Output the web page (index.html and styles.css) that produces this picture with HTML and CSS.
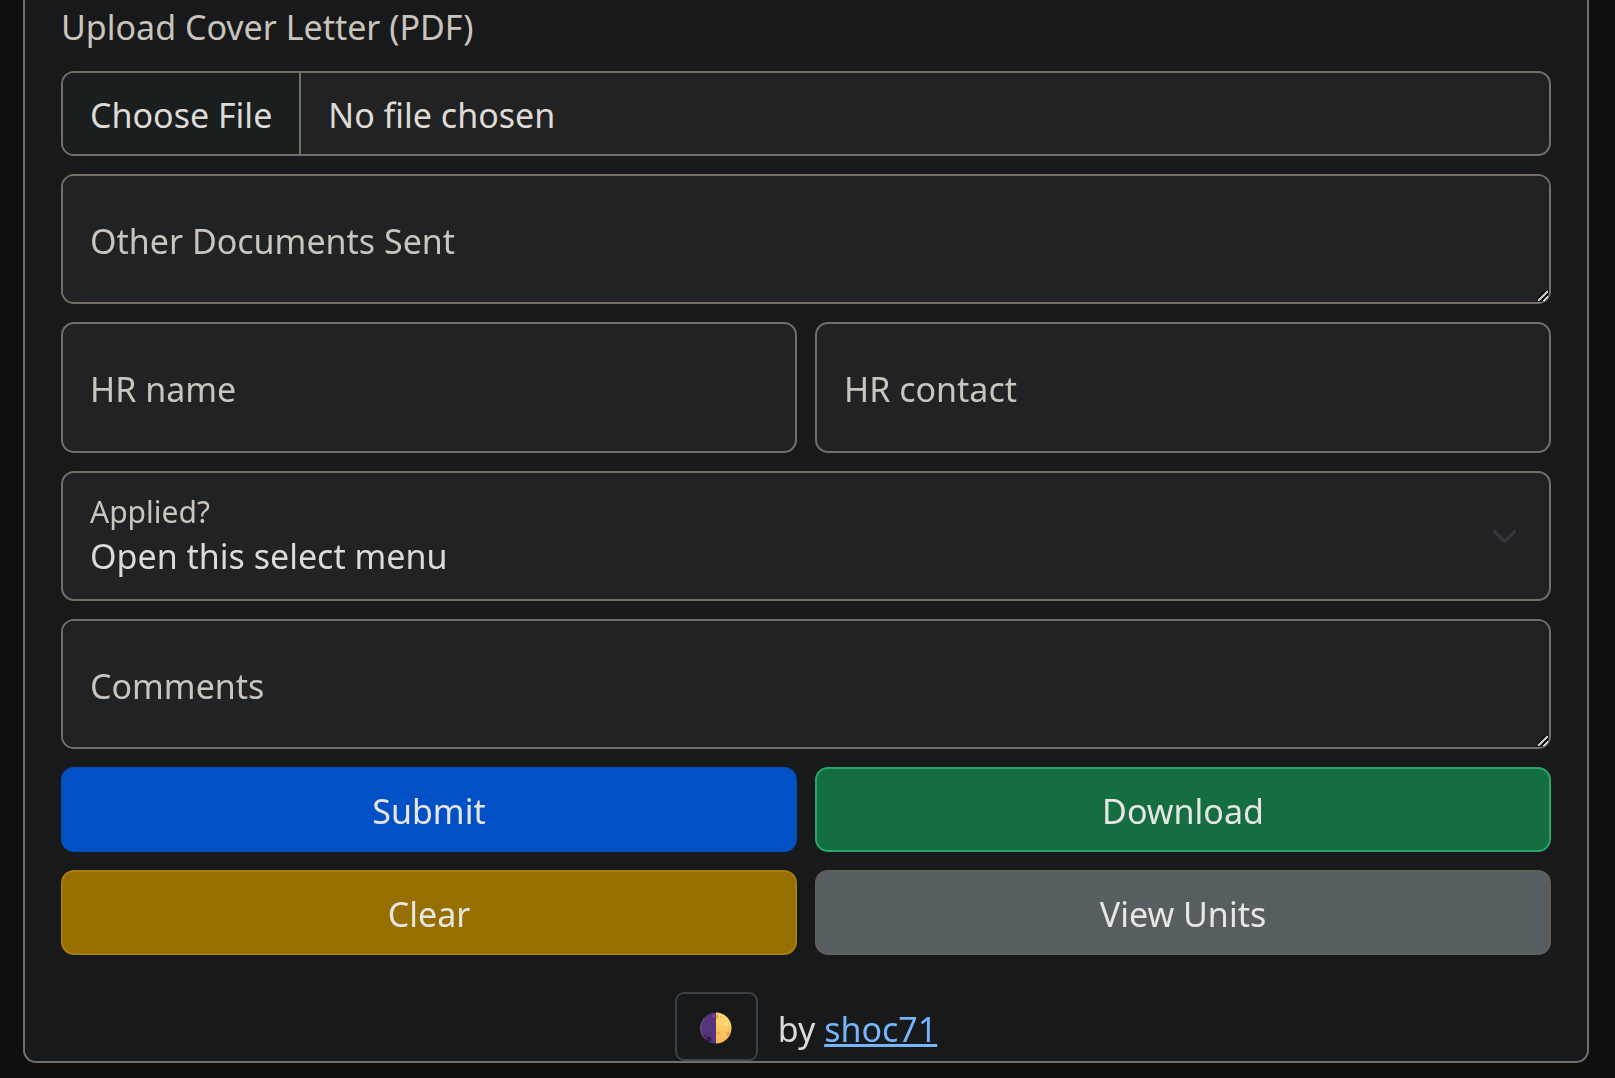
FILE: index.html
```html
<!DOCTYPE html>
<html lang="en">
<head>
<meta charset="utf-8">
<meta name="viewport" content="width=device-width, initial-scale=1">
<title>Job application</title>
<link rel="stylesheet" href="styles.css">
</head>
<body>
<main class="card">
  <form class="form">
    <div class="upload wide">
      <label class="upload-label" for="cover">Upload Cover Letter (PDF)</label>
      <input class="control file" type="file" id="cover" accept="application/pdf">
    </div>
    <div class="field wide">
      <textarea class="control" id="documents"></textarea>
      <label class="field-label" for="documents">Other Documents Sent</label>
    </div>
    <div class="field">
      <input class="control text" type="text" id="hr-name">
      <label class="field-label" for="hr-name">HR name</label>
    </div>
    <div class="field">
      <input class="control text" type="text" id="hr-contact">
      <label class="field-label" for="hr-contact">HR contact</label>
    </div>
    <div class="field wide">
      <select class="control select" id="applied">
        <option>Open this select menu</option>
        <option>Yes</option>
        <option>No</option>
      </select>
      <label class="field-label raised" for="applied">Applied?</label>
      <svg class="chevron" viewBox="0 0 16 16" aria-hidden="true"><path d="m2 5 6 6 6-6"/></svg>
    </div>
    <div class="field wide">
      <textarea class="control" id="comments"></textarea>
      <label class="field-label" for="comments">Comments</label>
    </div>
    <button class="btn submit" type="submit">Submit</button>
    <button class="btn download" type="button">Download</button>
    <button class="btn clear" type="reset">Clear</button>
    <button class="btn units" type="button">View Units</button>
  </form>
  <footer class="footer">
    <button class="theme" type="button" aria-label="Toggle theme">
      <svg class="moon" viewBox="0 0 32 32" aria-hidden="true">
        <defs>
          <linearGradient id="lit" x1="0" y1="0" x2="0" y2="1">
            <stop offset="0" stop-color="#ffdc74"/>
            <stop offset="1" stop-color="#f9b653"/>
          </linearGradient>
        </defs>
        <path d="M16 0.500a15.500 15.500 0 0 0 0 31z" fill="#56347c"/>
        <path d="M16 0.500a15.500 15.500 0 0 1 0 31z" fill="url(#lit)"/>
        <path d="M4 6.500A15.500 15.500 0 0 0 5 27" fill="none" stroke="#765a7d" stroke-width="1"/>
        <circle cx="9" cy="27" r="2.500" fill="#321c48"/>
        <circle cx="5" cy="24" r="1.500" fill="#422962"/>
        <circle cx="14" cy="4" r="2" fill="#6f4586"/>
        <path d="M16 2a2.500 2.500 0 0 1 0 5z" fill="#e9a54a"/>
        <circle cx="26" cy="12" r="2" fill="#ffe596"/>
        <circle cx="28" cy="22" r="2" fill="#e5a457"/>
        <circle cx="18" cy="21" r="2" fill="#f2b258"/>
        <circle cx="21" cy="5" r="1" fill="#ecaf54"/>
      </svg>
    </button>
    <p class="credit">by <a class="author" href="#">shoc71</a></p>
  </footer>
</main>
</body>
</html>
```
FILE: styles.css
```css
:root {
  color-scheme: dark;
  --line: #746e65;
  --field: #212223;
  --text: #dedbd6;
  --muted: #c9c4bc;
}

* {
  box-sizing: border-box;
}

body {
  margin: 0;
  padding: 0 26px 15px 23px;
  background: #0e100f;
  color: var(--text);
  font: 34px/55px "Noto Sans", "Open Sans", sans-serif;
}

.card {
  padding: 0 36px;
  border: 2px solid var(--line);
  border-top: 0;
  border-radius: 0 0 13px 13px;
  background: #18191a;
}

.form {
  display: grid;
  grid-template-columns: 1fr 1fr;
  gap: 18px;
}

.wide {
  grid-column: 1 / -1;
}

.upload {
  display: grid;
  gap: 16px;
}

.upload-label {
  color: var(--muted);
}

.control {
  display: block;
  width: 100%;
  height: 130px;
  margin: 0;
  padding: 52px 27px 20px;
  border: 2px solid var(--line);
  border-radius: 13px;
  background: var(--field);
  color: var(--text);
  font: inherit;
}

.control.text {
  height: 131px;
}

/* Two-stripe resize grip */
textarea::-webkit-resizer {
  background: linear-gradient(135deg, transparent 4px, #111 4px 6px, #c8c6c2 6px 8px, #111 8px 10px, #e4e2de 10px 12px, transparent 12px) 4px 4px / 10px 10px no-repeat;
}

.control.file {
  height: 85px;
  padding: 0;
  line-height: 81px;
  overflow: hidden;
}

.file::file-selector-button {
  height: 81px;
  margin: 0 27px 0 0;
  padding: 4px 27px 0;
  border: 0;
  border-right: 2px solid var(--line);
  background: #1b1e1f;
  color: var(--text);
  font: inherit;
  line-height: 55px;
}

.field {
  display: grid;
}

.field > * {
  grid-area: 1 / 1;
}

.field-label {
  align-self: center;
  justify-self: start;
  margin: 4px 0 0 29px;
  color: var(--muted);
  pointer-events: none;
}

.field-label.raised {
  align-self: start;
  margin-top: 18px;
  font-size: 30px;
  line-height: 46px;
}

.control.select {
  appearance: none;
  padding-bottom: 12px;
}

.chevron {
  align-self: center;
  justify-self: end;
  width: 27px;
  margin-right: 33px;
  fill: none;
  stroke: #35363e;
  stroke-width: 2;
  stroke-linecap: round;
  stroke-linejoin: round;
  pointer-events: none;
}

.btn {
  height: 85px;
  padding: 4px 27px 0;
  border: 2px solid;
  border-radius: 13px;
  color: #e8e6e3;
  font: inherit;
}

.submit {
  border-color: #034fbd;
  background: #0150c5;
}

.download {
  border-color: #29a66e;
  background: #156d42;
}

.clear {
  border-color: #a97f0c;
  background: #966f00;
}

.units {
  border-color: #625f58;
  background: #575e61;
}

.footer {
  display: flex;
  justify-content: center;
  gap: 20px;
  padding-top: 37px;
}

.theme {
  display: grid;
  place-items: center;
  width: 83px;
  height: 69px;
  padding: 2px 0 0;
  border: 2px solid #3e4143;
  border-radius: 9px;
  background: transparent;
}

.moon {
  width: 32px;
  height: 32px;
}

.credit {
  margin: 10px 0 0;
}

.author {
  color: #74b5fb;
  text-decoration-thickness: 3px;
}
```
